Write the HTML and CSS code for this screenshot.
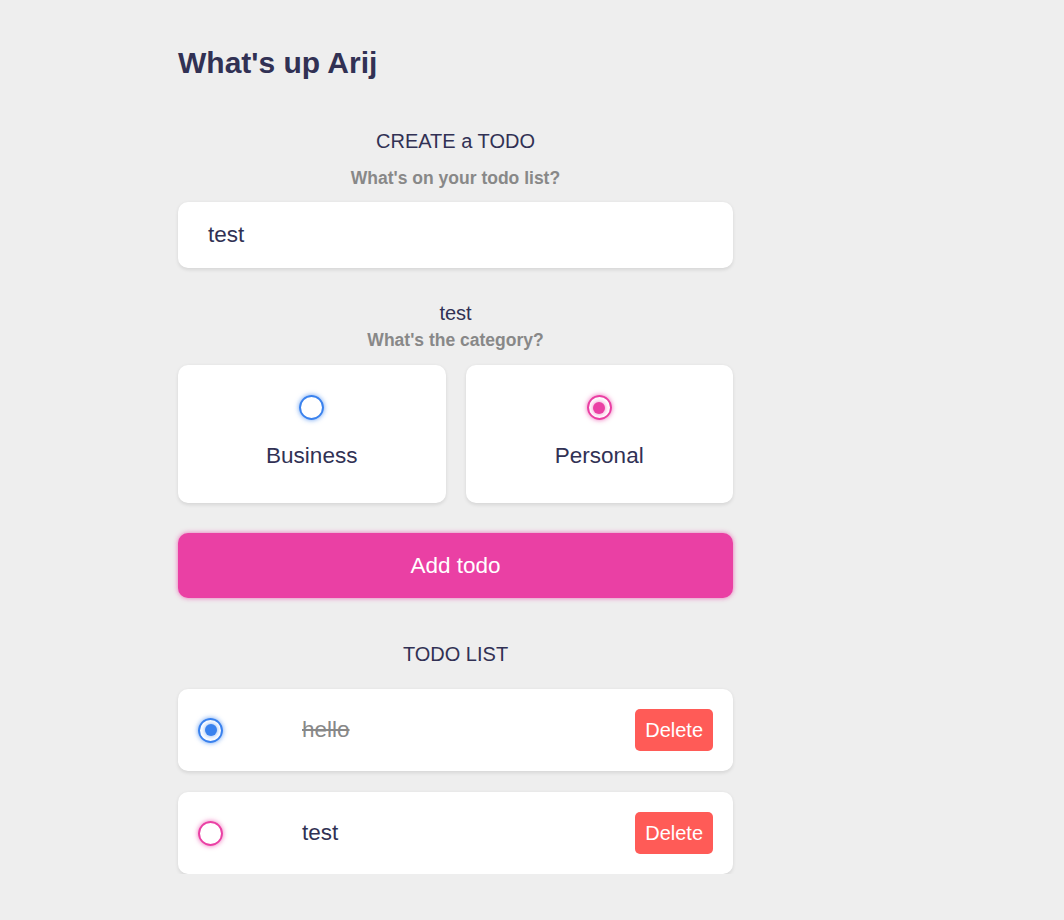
FILE: index.html
```html
<!DOCTYPE html>
<html lang="en">
<head>
<meta charset="utf-8">
<title>Todo</title>
<link rel="stylesheet" href="styles.css">
</head>
<body>
<main class="app">
  <h1 class="title">What's up Arij</h1>

  <section class="create">
    <h3 class="heading">CREATE a TODO</h3>
    <h4 class="sub sub-first">What's on your todo list?</h4>
    <div class="text-input">test</div>
    <p class="echo">test</p>
    <h4 class="sub sub-cat">What's the category?</h4>
    <div class="options">
      <div class="option">
        <span class="bubble business"></span>
        <div class="option-label">Business</div>
      </div>
      <div class="option">
        <span class="bubble personal checked"></span>
        <div class="option-label">Personal</div>
      </div>
    </div>
    <button class="add">Add todo</button>
  </section>

  <section class="list-section">
    <h3 class="heading">TODO LIST</h3>
    <div class="list">
      <div class="item done">
        <span class="bubble business checked"></span>
        <div class="content">hello</div>
        <button class="delete">Delete</button>
      </div>
      <div class="item">
        <span class="bubble personal"></span>
        <div class="content">test</div>
        <button class="delete">Delete</button>
      </div>
    </div>
  </section>
</main>
</body>
</html>
```

FILE: styles.css
```css
* {
  margin: 0;
  padding: 0;
  box-sizing: border-box;
}

html, body {
  background: #eeeeee;
}

body {
  margin: 0;
  font-family: "Liberation Sans", Arial, sans-serif;
  color: #313154;
}

.app {
  width: 555px;
  margin-left: 178px;
  padding-top: 46px;
}

.title {
  font-size: 30px;
  line-height: 34px;
  font-weight: 700;
  color: #313154;
}

.heading {
  font-size: 20px;
  line-height: 23px;
  font-weight: 400;
  text-align: center;
  color: #313154;
}

.create .heading {
  margin-top: 50px;
}

.sub {
  font-size: 17.5px;
  line-height: 20px;
  font-weight: 700;
  color: #888888;
  text-align: center;
}

.sub-first {
  margin-top: 15px;
}

.text-input {
  margin-top: 14px;
  background: #ffffff;
  border-radius: 10px;
  box-shadow: 0 1.25px 3.75px rgba(0, 0, 0, 0.1);
  padding: 20px 30px;
  font-size: 22.5px;
  line-height: 26px;
  color: #313154;
}

.echo {
  margin-top: 34px;
  font-size: 20px;
  line-height: 23px;
  text-align: center;
  color: #313154;
}

.sub-cat {
  margin-top: 5px;
}

.options {
  margin-top: 15px;
  display: grid;
  grid-template-columns: 1fr 1fr;
  gap: 20px;
}

.option {
  display: flex;
  flex-direction: column;
  align-items: center;
  background: #ffffff;
  border-radius: 10px;
  box-shadow: 0 1.25px 3.75px rgba(0, 0, 0, 0.1);
  padding: 30px 30px 34px;
}

.option-label {
  margin-top: 23px;
  font-size: 22.5px;
  line-height: 26px;
  color: #313154;
}

.bubble {
  display: flex;
  align-items: center;
  justify-content: center;
  flex: none;
  width: 25px;
  height: 25px;
  border-radius: 999px;
  border: 2.5px solid #3a82ee;
  box-shadow: 0 0 5px rgba(58, 130, 238, 0.75);
}

.bubble.personal {
  border-color: #ea40a4;
  box-shadow: 0 0 5px rgba(234, 64, 164, 0.75);
}

.bubble.checked::after {
  content: "";
  display: block;
  width: 12px;
  height: 12px;
  border-radius: 999px;
  background: #3a82ee;
  box-shadow: 0 0 5px rgba(58, 130, 238, 0.75);
}

.bubble.personal.checked::after {
  background: #ea40a4;
  box-shadow: 0 0 5px rgba(234, 64, 164, 0.75);
}

.add {
  display: block;
  width: 100%;
  margin-top: 30px;
  border: none;
  background: #ea40a4;
  color: #ffffff;
  font-family: "Liberation Sans", Arial, sans-serif;
  font-size: 22.5px;
  line-height: 25px;
  padding: 20px 30px;
  border-radius: 10px;
  box-shadow: 0 0 5px rgba(234, 64, 164, 0.75);
}

.list-section .heading {
  margin-top: 45px;
}

.list {
  margin-top: 23px;
  display: flex;
  flex-direction: column;
  gap: 21px;
}

.item {
  display: flex;
  align-items: center;
  background: #ffffff;
  border-radius: 10px;
  box-shadow: 0 1.25px 3.75px rgba(0, 0, 0, 0.1);
  padding: 20px;
}

.item .bubble {
  margin-right: 79px;
}

.content {
  flex: 1 1 0%;
  font-size: 22.5px;
  line-height: 26px;
  color: #313154;
}

.item.done .content {
  color: #888888;
  text-decoration: line-through;
}

.delete {
  border: none;
  background: #ff5b57;
  color: #ffffff;
  font-family: "Liberation Sans", Arial, sans-serif;
  font-size: 20px;
  line-height: 22px;
  padding: 10px;
  border-radius: 5px;
}
```
